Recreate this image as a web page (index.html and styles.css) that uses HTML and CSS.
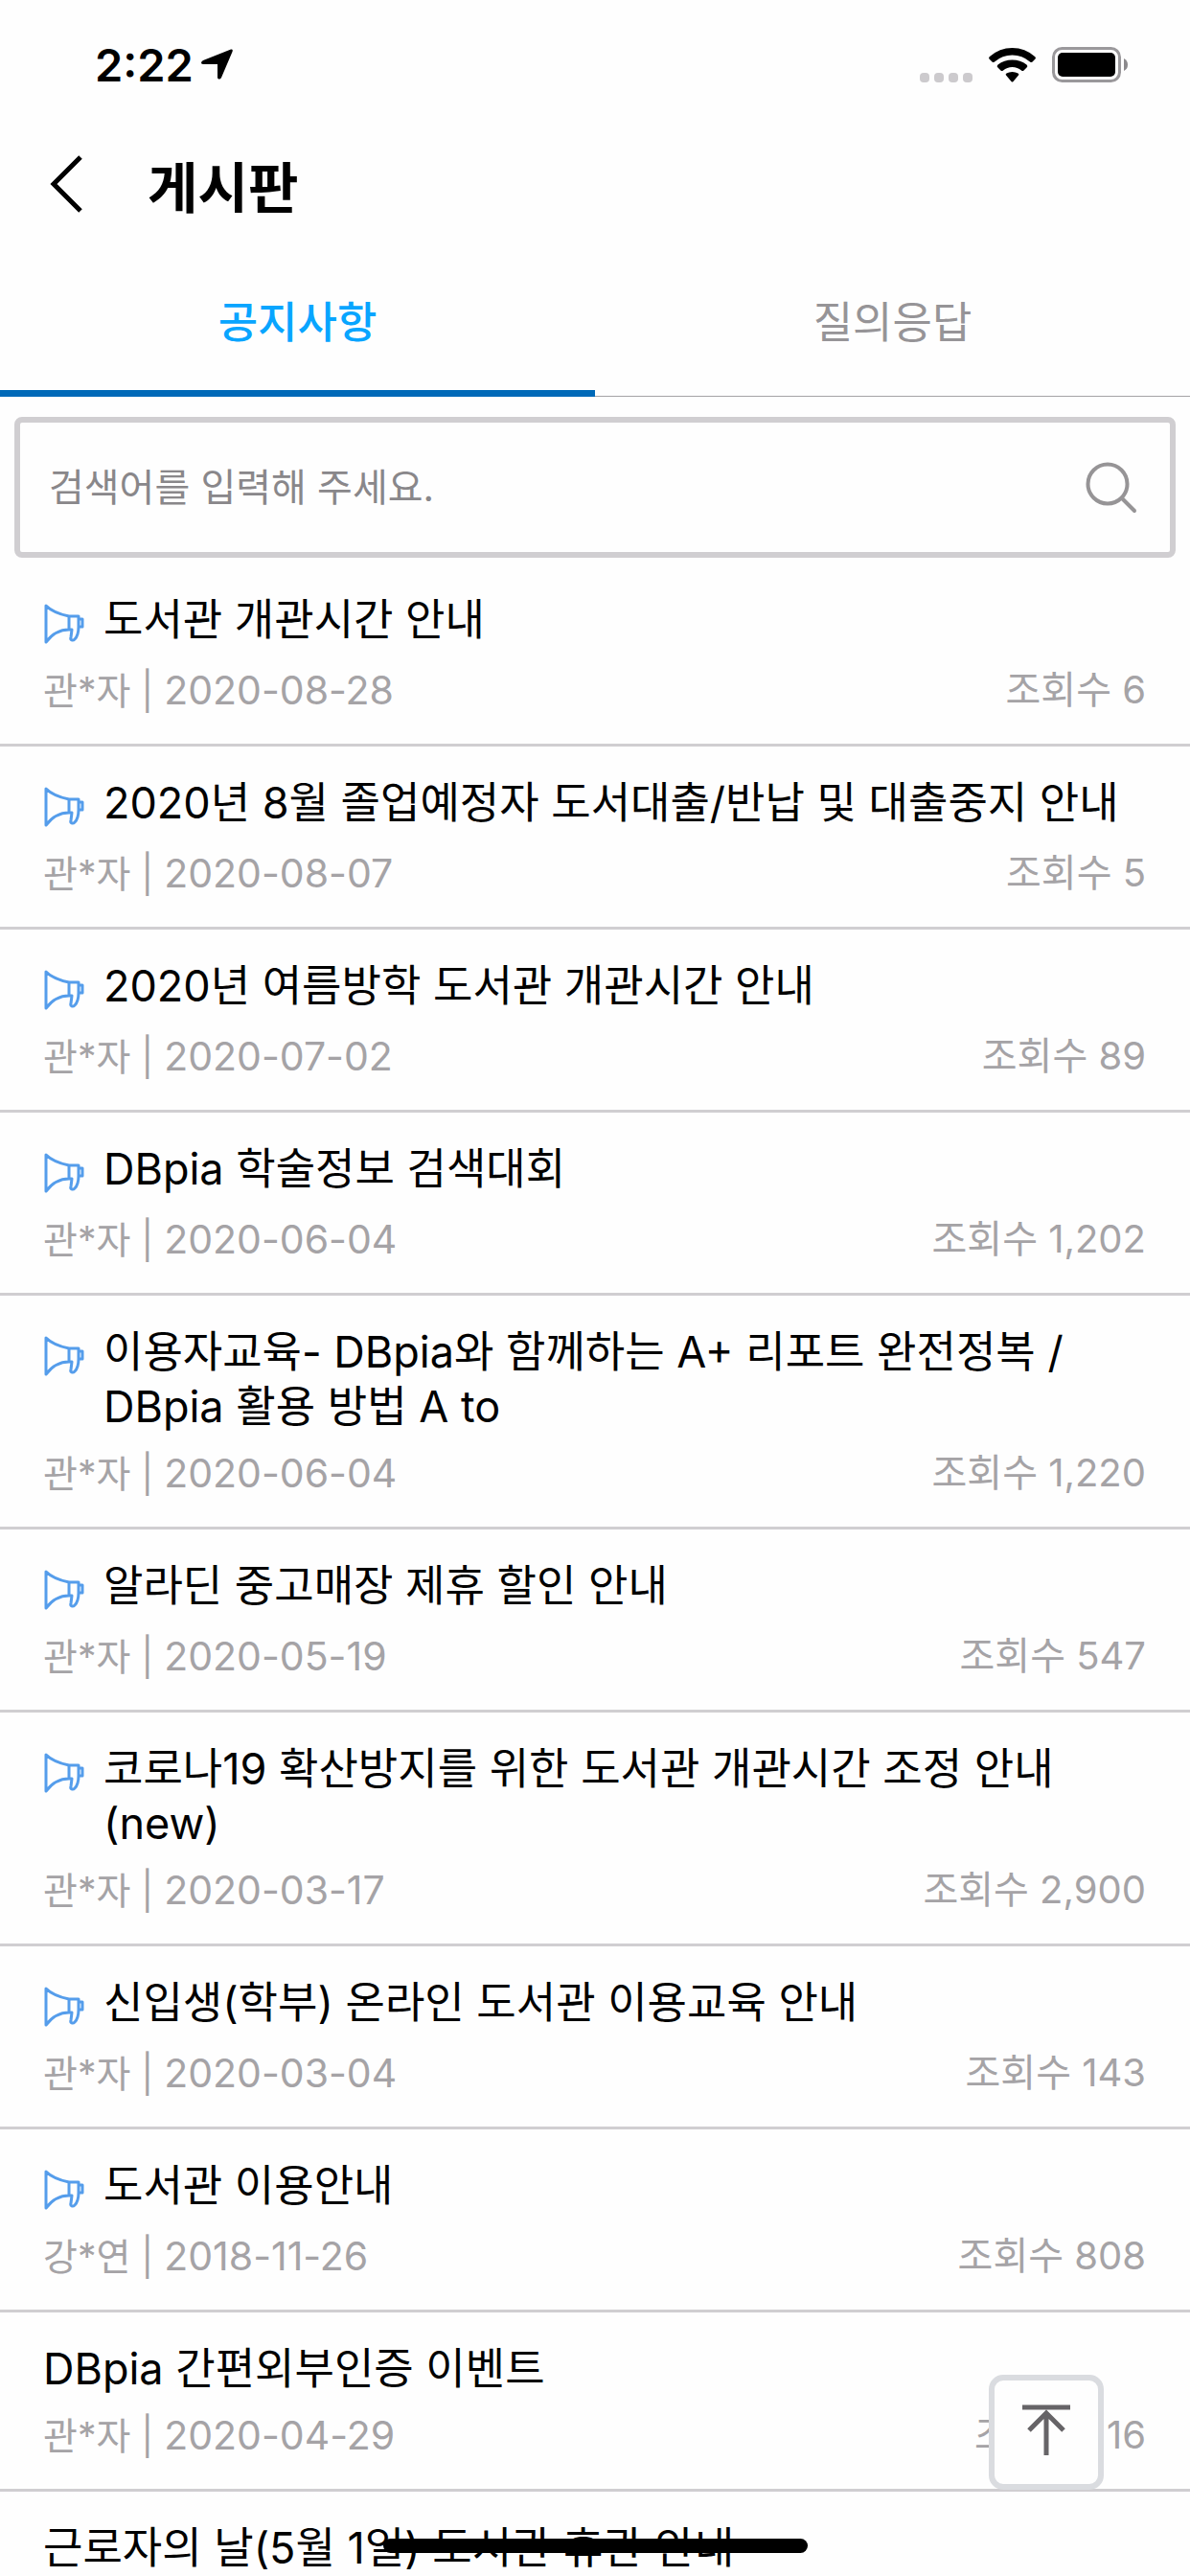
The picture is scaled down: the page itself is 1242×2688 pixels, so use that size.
FILE: index.html
```html
<!DOCTYPE html>
<html lang="ko">
<head>
    <meta charset="UTF-8">
    <meta name="viewport" content="width=device-width, initial-scale=1.0">
    <title>게시판</title>
    <link rel="stylesheet" href="styles.css">
</head>
<body>
    <svg class="hidden" aria-hidden="true">
        <symbol id="notice" viewBox="0 0 44 44">
            <path d="M3 3V41C9 33 17 28 27 28V14C17 12 9 9 3 3Z M27 14H37V25C37 31 35 36 33 38C31 40 28 39 29 36L30 28H27 M37 17H41V25H37" fill="none" stroke="#559deb" stroke-width="3" stroke-linejoin="round" stroke-linecap="round"/>
        </symbol>
    </svg>

    <div class="app">
        <div class="status-bar">
            <div class="status-left">
                <span class="time">2:22</span>
                <svg width="33" height="32" viewBox="0 0 33 32"><path d="M31 0.5Q33.500 0 32.500 3L21 30Q20 32 18 31.500Q17 31 17 29.500V16H2.500Q0 16 0 14.500Q0 13 2 12Z" fill="#000"/></svg>
            </div>
            <div class="status-right">
                <div class="signal"><i></i><i></i><i></i><i></i></div>
                <svg width="49" height="36" viewBox="0 0 49 36">
                    <path d="M0.500 11.500Q-0.500 10 1 9Q11 0 24.500 0T48 9Q49.500 10 48.500 11.500L45.500 14.500Q44.500 15.500 43 14.500Q35 7.500 24.500 7.500T6 14.500Q4.500 15.500 3.500 14.500Z"/>
                    <path d="M9 20Q8 19 9.500 17.500Q16 12.500 24.500 12.500T39.500 17.500Q41 19 40 20L36.500 23.500Q35.500 24.500 34 23.500Q30 20 24.500 20T15 23.500Q13.500 24.500 12.500 23.500Z"/>
                    <path d="M18 28.500Q17 27.500 18.500 26.500Q21 25 24.500 25T30.500 26.500Q32 27.500 31 28.500L25.500 35Q24.500 36 23.500 35Z"/>
                </svg>
                <svg width="79" height="37" viewBox="0 0 79 37">
                    <rect x="1.500" y="1.500" width="69" height="34" rx="9" fill="none" stroke="#9a989b" stroke-width="3"/>
                    <rect x="6" y="6" width="60" height="25" rx="5"/>
                    <path d="M75 12Q79 14 79 18.500T75 25Z" fill="#8b898c"/>
                </svg>
            </div>
        </div>

        <header class="header">
            <button class="back" type="button" aria-label="뒤로">
                <svg width="36" height="60" viewBox="0 0 36 60"><path d="M33 2L5 30L33 58" fill="none" stroke="#000" stroke-width="5"/></svg>
            </button>
            <h1>게시판</h1>
        </header>

        <nav class="tabs">
            <a href="#notice-list" class="tab active">공지사항</a>
            <a href="#qna" class="tab">질의응답</a>
        </nav>

        <form class="search">
            <input type="text" aria-label="검색어" placeholder="검색어를 입력해 주세요.">
            <button type="submit" aria-label="검색">
                <svg width="54" height="54" viewBox="0 0 54 54"><g fill="none" stroke="#969496" stroke-width="4" stroke-linecap="round"><circle cx="23" cy="23" r="20.500"/><path d="M38 38L51 51"/></g></svg>
            </button>
        </form>

        <ul class="list" id="notice-list">
            <li>
                <a class="title pinned" href="#"><svg class="icon"><use href="#notice"/></svg><span>도서관 개관시간 안내</span></a>
                <div class="meta"><span class="writer">관*자 | <span class="date">2020-08-28</span></span><span>조회수 6</span></div>
            </li>
            <li>
                <a class="title pinned" href="#"><svg class="icon"><use href="#notice"/></svg><span>2020년 8월 졸업예정자 도서대출/반납 및 대출중지 안내</span></a>
                <div class="meta"><span class="writer">관*자 | <span class="date">2020-08-07</span></span><span>조회수 5</span></div>
            </li>
            <li>
                <a class="title pinned" href="#"><svg class="icon"><use href="#notice"/></svg><span>2020년 여름방학 도서관 개관시간 안내</span></a>
                <div class="meta"><span class="writer">관*자 | <span class="date">2020-07-02</span></span><span>조회수 89</span></div>
            </li>
            <li>
                <a class="title pinned" href="#"><svg class="icon"><use href="#notice"/></svg><span>DBpia 학술정보 검색대회</span></a>
                <div class="meta"><span class="writer">관*자 | <span class="date">2020-06-04</span></span><span>조회수 1,202</span></div>
            </li>
            <li>
                <a class="title pinned" href="#"><svg class="icon"><use href="#notice"/></svg><span>이용자교육- DBpia와 함께하는 A+ 리포트 완전정복 / DBpia 활용 방법 A to</span></a>
                <div class="meta"><span class="writer">관*자 | <span class="date">2020-06-04</span></span><span>조회수 1,220</span></div>
            </li>
            <li>
                <a class="title pinned" href="#"><svg class="icon"><use href="#notice"/></svg><span>알라딘 중고매장 제휴 할인 안내</span></a>
                <div class="meta"><span class="writer">관*자 | <span class="date">2020-05-19</span></span><span>조회수 547</span></div>
            </li>
            <li>
                <a class="title pinned" href="#"><svg class="icon"><use href="#notice"/></svg><span>코로나19 확산방지를 위한 도서관 개관시간 조정 안내 (new)</span></a>
                <div class="meta"><span class="writer">관*자 | <span class="date">2020-03-17</span></span><span>조회수 2,900</span></div>
            </li>
            <li>
                <a class="title pinned" href="#"><svg class="icon"><use href="#notice"/></svg><span>신입생(학부) 온라인 도서관 이용교육 안내</span></a>
                <div class="meta"><span class="writer">관*자 | <span class="date">2020-03-04</span></span><span>조회수 143</span></div>
            </li>
            <li>
                <a class="title pinned" href="#"><svg class="icon"><use href="#notice"/></svg><span>도서관 이용안내</span></a>
                <div class="meta"><span class="writer">강*연 | <span class="date">2018-11-26</span></span><span>조회수 808</span></div>
            </li>
            <li>
                <a class="title" href="#">DBpia 간편외부인증 이벤트</a>
                <div class="meta"><span class="writer">관*자 | <span class="date">2020-04-29</span></span><span>조회수 116</span></div>
            </li>
            <li>
                <a class="title" href="#">근로자의 날(5월 1일) 도서관 휴관 안내</a>
            </li>
        </ul>

        <button class="top-button" type="button" aria-label="맨 위로">
            <svg width="54" height="54" viewBox="0 0 54 54"><path d="M2 4H52M27 54V10M9 28L27 10L45 28" fill="none" stroke="#666467" stroke-width="5"/></svg>
        </button>
        <div class="home-bar"></div>
    </div>
</body>
</html>
```

FILE: styles.css
```css
* {
    box-sizing: border-box;
}
body {
    margin: 0;
    background-color: #fefefe;
    color: #000;
    font-family: Inter, "Noto Sans CJK KR", sans-serif;
}
a {
    color: inherit;
    text-decoration: none;
}
button {
    padding: 0;
    border: none;
    background: none;
    cursor: pointer;
}
svg {
    display: block;
}
.hidden {
    position: absolute;
    width: 0;
    height: 0;
}
.app {
    position: relative;
    display: flex;
    flex-direction: column;
    height: 100vh;
    overflow: hidden;
}

/* status bar */
.status-bar {
    display: flex;
    justify-content: space-between;
    align-items: center;
    height: 134px;
    padding: 0 65px 0 99px;
}
.status-left {
    display: flex;
    align-items: center;
    gap: 8px;
}
.time {
    font-size: 47px;
    font-weight: 600;
}
.status-right {
    display: flex;
    align-items: flex-end;
    gap: 17px;
}
.signal {
    display: flex;
    gap: 5px;
}
.signal i {
    width: 10px;
    height: 10px;
    border-radius: 4px;
    background-color: #cccacd;
}

/* header */
.header {
    display: flex;
    align-items: center;
    gap: 67px;
    height: 126px;
    padding: 0 51px;
}
.back {
    padding-bottom: 10px;
}
.header h1 {
    margin: 0;
    font-size: 57px;
    font-weight: 700;
    line-height: 80px;
}

/* tabs */
.tabs {
    display: flex;
    height: 154px;
}
.tab {
    flex: 1;
    display: flex;
    align-items: center;
    justify-content: center;
    padding-bottom: 6px;
    border-bottom: 1px solid #a5a3a6;
    color: #969497;
    font-size: 45px;
}
.tab.active {
    padding-bottom: 0;
    border-bottom: 7px solid #0069b8;
    color: #08a5ff;
    font-weight: 500;
}

/* search */
.search {
    display: flex;
    align-items: center;
    height: 147px;
    margin: 21px 15px 6px;
    padding: 0 34px 0 30px;
    border: 6px solid #d0ced1;
    border-radius: 8px;
}
.search input {
    flex: 1;
    min-width: 0;
    padding: 0;
    border: none;
    outline: none;
    background: none;
    font-family: inherit;
    font-size: 40px;
}
.search input::placeholder {
    color: #89878a;
}

/* list */
.list {
    flex: 1;
    min-height: 0;
    margin: 0;
    padding: 0;
    overflow: hidden;
    list-style: none;
}
.list li {
    padding: 30px 46px 31px 45px;
    border-bottom: 3px solid #d0ced1;
}
.title {
    display: flex;
    gap: 19px;
    font-size: 45px;
    line-height: 57px;
    word-break: keep-all;
}
.pinned {
    min-height: 61px;
}
.icon {
    flex: none;
    width: 44px;
    height: 44px;
    margin-top: 11px;
}
.meta {
    display: flex;
    justify-content: space-between;
    height: 50px;
    margin-top: 16px;
    color: #a5a3a6;
    font-size: 40px;
    line-height: 50px;
}
.writer {
    font-size: 39px;
}
.date {
    font-size: 41px;
}

.top-button {
    position: absolute;
    right: 90px;
    bottom: 90px;
    display: flex;
    align-items: center;
    justify-content: center;
    width: 120px;
    height: 120px;
    padding-bottom: 6px;
    border: 6px solid #dadce0;
    border-radius: 15px;
    background-color: #fefefe;
}
.home-bar {
    position: absolute;
    left: 400px;
    bottom: 24px;
    width: 443px;
    height: 15px;
    border-radius: 8px;
    background-color: #000;
}
```
